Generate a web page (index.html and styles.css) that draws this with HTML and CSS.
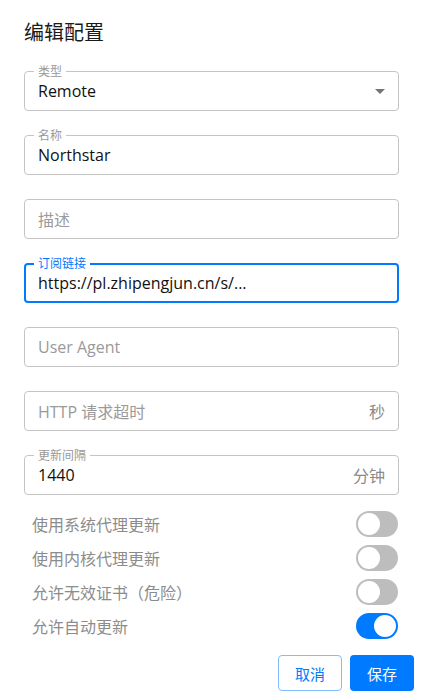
FILE: index.html
```html
<!DOCTYPE html>
<html lang="zh-CN">
<head>
<meta charset="utf-8">
<link rel="stylesheet" href="styles.css">
</head>
<body>
<div class="dialog">
  <h2 class="title">编辑配置</h2>
  <div class="content">
    <div class="field">
      <span class="label">类型</span>
      <span class="value">Remote</span>
      <svg class="arrow" width="10" height="5" viewBox="0 0 10 5"><path d="M0 0h10L5 5z" fill="#757575"/></svg>
    </div>
    <div class="field">
      <span class="label">名称</span>
      <span class="value">Northstar</span>
    </div>
    <div class="field">
      <span class="placeholder">描述</span>
    </div>
    <div class="field focused">
      <span class="label">订阅链接</span>
      <span class="value">https://pl.zhipengjun.cn/s/...</span>
    </div>
    <div class="field">
      <span class="placeholder">User Agent</span>
    </div>
    <div class="field">
      <span class="placeholder">HTTP 请求超时</span>
      <span class="suffix">秒</span>
    </div>
    <div class="field">
      <span class="label">更新间隔</span>
      <span class="value">1440</span>
      <span class="suffix">分钟</span>
    </div>
    <div class="switches">
      <div class="row"><span class="row-label">使用系统代理更新</span><span class="switch"></span></div>
      <div class="row"><span class="row-label">使用内核代理更新</span><span class="switch"></span></div>
      <div class="row"><span class="row-label">允许无效证书（危险）</span><span class="switch"></span></div>
      <div class="row"><span class="row-label">允许自动更新</span><span class="switch on"></span></div>
    </div>
  </div>
  <div class="actions">
    <button class="btn outline">取消</button>
    <button class="btn primary">保存</button>
  </div>
</div>
</body>
</html>
```
FILE: styles.css
```css
html, body {
  margin: 0;
  padding: 0;
  background: #fff;
}
body {
  font-family: "Open Sans", "Noto Sans", "Noto Sans CJK SC", sans-serif;
  color: #1a1a1a;
}
.dialog {
  width: 422px;
  height: 700px;
  box-sizing: border-box;
  display: flex;
  flex-direction: column;
}
.title {
  margin: 0;
  padding: 16px 24px;
  font-size: 20px;
  font-weight: 400;
  line-height: 32px;
  color: #1a1a1a;
  font-family: "Noto Sans CJK SC", sans-serif;
}
.content {
  padding: 7px 23px 0 24px;
  display: flex;
  flex-direction: column;
  gap: 24px;
}
.field {
  position: relative;
  height: 40px;
  box-sizing: border-box;
  border: 1px solid #c4c4c4;
  border-radius: 4px;
  display: flex;
  align-items: center;
  padding: 0 13px 0 13px;
}
.field.focused {
  border: 2px solid #007aff;
  padding: 0 12px;
}
.label {
  position: absolute;
  left: 9px;
  top: -9px;
  padding: 0 4px;
  background: #fff;
  font-family: "Noto Sans CJK SC", sans-serif;
  font-size: 12px;
  line-height: 16px;
  color: #999;
}
.focused .label {
  left: 8px;
  top: -10px;
  color: #007aff;
}
.value {
  font-size: 16px;
  color: #111;
  flex: 1;
}
.placeholder {
  flex: 1;
  font-size: 16px;
  color: #9a9a9a;
  font-family: "Open Sans", "Noto Sans CJK SC", sans-serif;
}
.suffix {
  font-size: 16px;
  color: #8a8a8a;
  font-family: "Noto Sans CJK SC", sans-serif;
}
.switches {
  margin-top: -8px;
  padding-left: 8px;
  display: flex;
  flex-direction: column;
  gap: 8px;
}
.row {
  display: flex;
  justify-content: space-between;
  align-items: center;
  height: 26px;
}
.row-label {
  font-family: "Noto Sans CJK SC", sans-serif;
  font-size: 16px;
  color: #8c8c8c;
}
.switch {
  position: relative;
  width: 42px;
  height: 26px;
  border-radius: 13px;
  background: #bdbdbd;
  margin-right: 1px;
}
.switch::after {
  content: "";
  position: absolute;
  left: 2px;
  top: 2px;
  width: 22px;
  height: 22px;
  border-radius: 50%;
  background: #fff;
}
.switch.on {
  background: #007aff;
}
.switch.on::after {
  left: 18px;
}
.actions {
  margin-top: 16px;
  padding: 0 8px;
  display: flex;
  justify-content: flex-end;
  gap: 8px;
}
.btn {
  width: 64px;
  height: 36px;
  border-radius: 4px;
  font-family: "Noto Sans CJK SC", sans-serif;
  font-size: 15px;
  cursor: pointer;
}
.btn.outline {
  background: #fff;
  border: 1px solid #80bcff;
  color: #007aff;
}
.btn.primary {
  background: #007aff;
  border: none;
  color: #fff;
}
```
